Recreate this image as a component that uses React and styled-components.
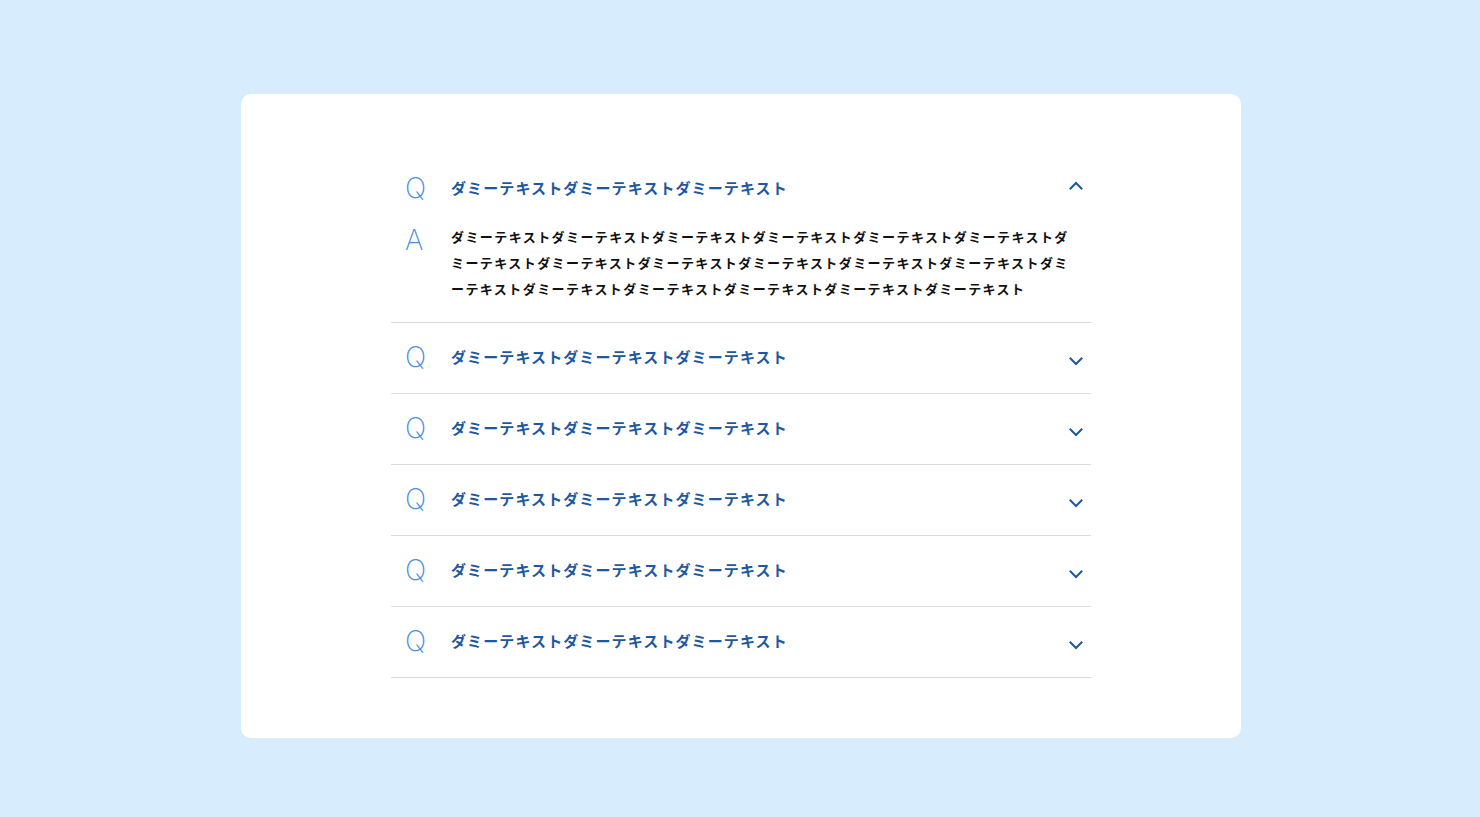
import React, { useState } from "react";
import styled, { createGlobalStyle } from "styled-components";

const Global = createGlobalStyle`
  html, body { margin: 0; padding: 0; }
  body {
    background: #d7edfd;
    font-family: "Noto Sans CJK JP", "Noto Sans", sans-serif;
  }
`;

const Page = styled.div`
  min-height: 817px;
  display: flex;
  justify-content: center;
  align-items: flex-start;
  padding: 94px 0 0 2px;
  box-sizing: border-box;
`;

const Card = styled.section`
  width: 1000px;
  background: #ffffff;
  border-radius: 10px;
  padding: 60px 150px 60px;
  box-sizing: border-box;
`;

const List = styled.div`
  display: flex;
  flex-direction: column;
`;

const Item = styled.div`
  border-bottom: 1px solid #dcdcdc;
`;

const Question = styled.button`
  all: unset;
  box-sizing: border-box;
  width: 100%;
  height: 70px;
  padding-bottom: 3px;
  display: grid;
  grid-template-columns: 60px 1fr 40px;
  align-items: center;
  cursor: pointer;
`;

const Letter = styled.span`
  font-family: "Inter", "Noto Sans", sans-serif;
  font-weight: 200;
  font-size: 28px;
  line-height: 1;
  color: #4a8fe3;
  padding-left: 14px;
  display: block;
`;

const QText = styled.span`
  font-size: 15px;
  font-weight: 700;
  letter-spacing: 1.1px;
  color: #1d58a0;
`;

const Chevron = styled.svg`
  width: 14px;
  height: 14px;
  justify-self: center;
  margin-top: ${(p) => (p.$open ? "-3px" : "9px")};
  margin-left: 10px;
`;

const Answer = styled.div`
  display: grid;
  grid-template-columns: 60px 624px;
  align-items: start;
  padding: 0 0 20px;
`;

const ALetter = styled(Letter)`
  margin-top: 2px;
`;

const AText = styled.p`
  margin: 0;
  font-size: 13px;
  font-weight: 700;
  letter-spacing: 1.42px;
  line-height: 26px;
  color: #111111;
`;

const Arrow = ({ open }) => (
  <Chevron $open={open} viewBox="0 0 14 14" fill="none">
    <path
      d={open ? "M1.5 9.5 L7 4 L12.5 9.5" : "M1.5 4.5 L7 10 L12.5 4.5"}
      stroke="#1d58a0"
      strokeWidth="2"
      strokeLinecap="square"
    />
  </Chevron>
);

const q = "ダミーテキスト".repeat(3);
const a = "ダミーテキスト".repeat(18);

export default function App() {
  const [open, setOpen] = useState(0);
  const items = Array.from({ length: 6 });
  return (
    <>
      <Global />
      <Page>
        <Card>
          <List>
            {items.map((_, i) => (
              <Item key={i}>
                <Question onClick={() => setOpen(open === i ? -1 : i)}>
                  <Letter>Q</Letter>
                  <QText>{q}</QText>
                  <Arrow open={open === i} />
                </Question>
                {open === i && (
                  <Answer>
                    <ALetter>A</ALetter>
                    <AText>{a}</AText>
                  </Answer>
                )}
              </Item>
            ))}
          </List>
        </Card>
      </Page>
    </>
  );
}
